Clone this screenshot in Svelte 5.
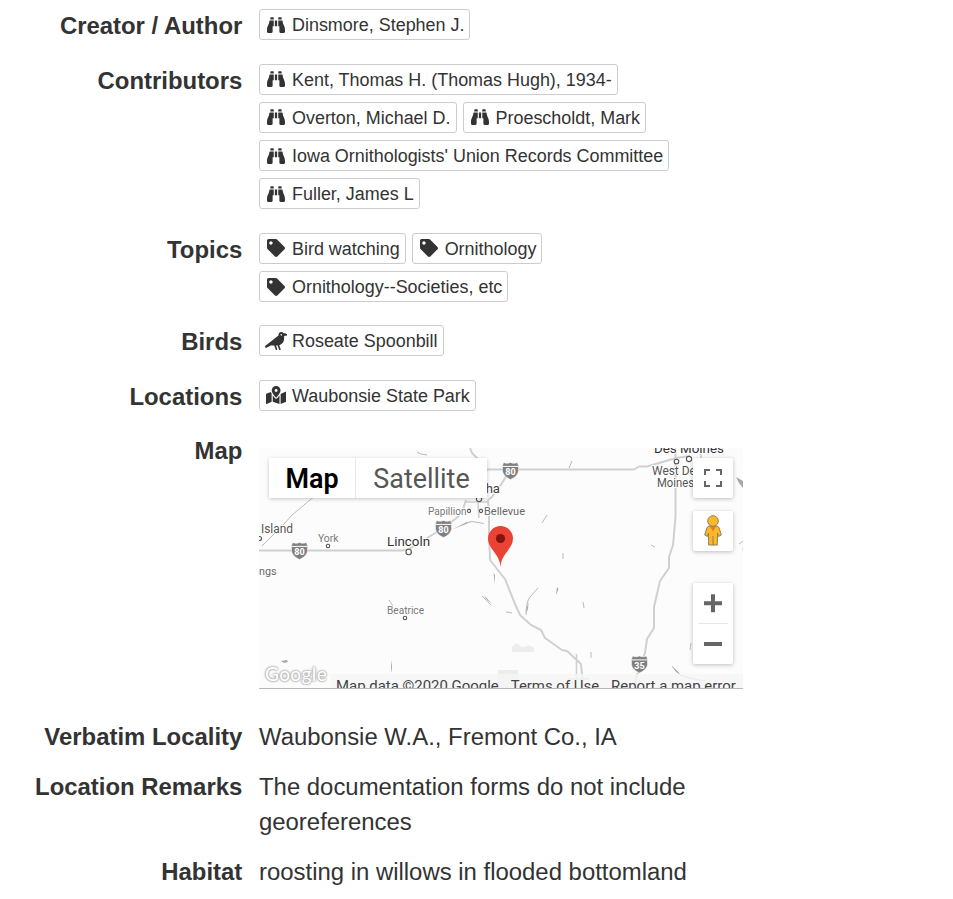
<script>
  const icons = {
    binoculars: {
      w: 512,
      d: 'M416 48c0-8.84-7.16-16-16-16h-64c-8.84 0-16 7.16-16 16v48h96V48zM63.91 159.99C61.4 253.84 3.46 274.22 0 404v44c0 17.67 14.33 32 32 32h96c17.67 0 32-14.33 32-32V288h32V128H95.84c-17.63 0-31.45 14.37-31.93 31.99zm384.18 0c-.48-17.62-14.3-31.99-31.93-31.99H320v160h32v160c0 17.67 14.33 32 32 32h96c17.67 0 32-14.33 32-32v-44c-3.46-129.78-61.4-150.16-63.91-244.01zM176 32h-64c-8.84 0-16 7.16-16 16v48h96V48c0-8.84-7.16-16-16-16zm48 256h64V128h-64v160z'
    },
    tag: {
      w: 512,
      d: 'M0 252.118V48C0 21.49 21.49 0 48 0h204.118a48 48 0 0 1 33.941 14.059l211.882 211.882c18.745 18.745 18.745 49.137 0 67.882L293.823 497.941c-18.745 18.745-49.137 18.745-67.882 0L14.059 286.059A48 48 0 0 1 0 252.118zM112 64c-26.51 0-48 21.49-48 48s21.49 48 48 48 48-21.49 48-48-21.49-48-48-48z'
    },
    crow: {
      w: 640,
      d: 'M544 32h-16.36C513.04 12.68 490.09 0 464 0c-44.18 0-80 35.82-80 80v20.98L12.09 393.57A30.216 30.216 0 0 0 0 417.74c0 22.46 23.64 37.07 43.73 27.03L165.27 384h96.49l44.41 120.1c2.27 6.23 9.15 9.44 15.38 7.17l22.55-8.21c6.23-2.27 9.44-9.15 7.17-15.38L312.94 384H352c1.91 0 3.76-.23 5.66-.29l44.51 120.38c2.27 6.23 9.15 9.44 15.38 7.17l22.55-8.21c6.23-2.27 9.44-9.15 7.17-15.38l-41.24-111.53C485.74 352.8 544 279.26 544 192v-80l96-16c0-35.35-42.98-64-96-64zm-80 72c-13.25 0-24-10.75-24-24 0-13.26 10.75-24 24-24s24 10.74 24 24c0 13.25-10.75 24-24 24z'
    },
    mapMarked: {
      w: 576,
      d: 'M288 0c-69.59 0-126 56.41-126 126 0 56.26 82.35 158.8 113.9 196.02 6.39 7.54 17.82 7.54 24.2 0C331.65 284.8 414 182.26 414 126 414 56.41 357.59 0 288 0zm0 168c-23.2 0-42-18.8-42-42s18.8-42 42-42 42 18.8 42 42-18.8 42-42 42zM20.12 215.95A32.006 32.006 0 0 0 0 245.66v250.32c0 11.32 11.43 19.06 21.94 14.86L160 448V214.92c-8.84-15.98-16.07-31.54-21.25-46.42L20.12 215.95zM288 359.67c-14.07 0-27.38-6.18-36.51-16.96-19.66-23.2-40.57-49.62-59.49-76.72v182l192 64V266c-18.92 27.09-39.82 53.52-59.49 76.72-9.13 10.77-22.44 16.95-36.51 16.95zm266.06-198.51L416 224v288l139.88-55.95A31.996 31.996 0 0 0 576 426.34V176.02c0-11.32-11.43-19.06-21.94-14.86z'
    }
  };

  const tagRows = [
    { label: 'Creator / Author', icon: 'binoculars', items: ['Dinsmore, Stephen J.'] },
    {
      label: 'Contributors',
      icon: 'binoculars',
      items: [
        'Kent, Thomas H. (Thomas Hugh), 1934-',
        'Overton, Michael D.',
        'Proescholdt, Mark',
        "Iowa Ornithologists' Union Records Committee",
        'Fuller, James L'
      ]
    },
    { label: 'Topics', icon: 'tag', items: ['Bird watching', 'Ornithology', 'Ornithology--Societies, etc'] },
    { label: 'Birds', icon: 'crow', items: ['Roseate Spoonbill'] },
    { label: 'Locations', icon: 'mapMarked', items: ['Waubonsie State Park'] }
  ];

  const textRows = [
    { label: 'Verbatim Locality', text: 'Waubonsie W.A., Fremont Co., IA' },
    { label: 'Location Remarks', text: 'The documentation forms do not include georeferences' },
    { label: 'Habitat', text: 'roosting in willows in flooded bottomland' }
  ];

  // Town markers: x, y, radius
  const towns = [
    [689, 459, 2.6],
    [676.5, 461.5, 2.3],
    [479, 499, 2.6],
    [469, 511, 1.6],
    [481, 511, 1.6],
    [259.5, 538.5, 2],
    [328, 546, 1.7],
    [408.7, 552, 2.7],
    [405, 618, 1.7]
  ];

  const labels = [
    { t: 'Des Moines', x: 654, y: 453, w: 70, s: 13, c: '#333' },
    { t: 'West Des', x: 652, y: 475, w: 50, s: 12, c: '#555' },
    { t: 'Moines', x: 657, y: 487, w: 37, s: 12, c: '#555' },
    { t: 'Omaha', x: 458, y: 493, w: 42, s: 13, c: '#444' },
    { t: 'Papillion', x: 428, y: 514.5, w: 38.5, s: 11, c: '#777' },
    { t: 'Bellevue', x: 484, y: 514.5, w: 41, s: 11, c: '#666' },
    { t: 'Island', x: 261, y: 533, w: 32, s: 12, c: '#555' },
    { t: 'York', x: 318, y: 541.5, w: 20.5, s: 11, c: '#777' },
    { t: 'Lincoln', x: 387, y: 545.5, w: 43, s: 13, c: '#333' },
    { t: 'ngs', x: 259, y: 575, w: 17.5, s: 11.5, c: '#666' },
    { t: 'Beatrice', x: 387, y: 613.5, w: 37, s: 11, c: '#777' }
  ];

  const shields = [
    [299.5, 551, '80'],
    [443.5, 529, '80'],
    [510.5, 471, '80'],
    [639.5, 664.5, '35']
  ];
</script>

<dl class="record">
  {#each tagRows as row}
    <div class="row">
      <dt>{row.label}</dt>
      <dd class="chips">
        {#each row.items as item}
          <a class="chip">
            <span class="icon">
              <svg height="18" width={(icons[row.icon].w / 512) * 18} viewBox="0 0 {icons[row.icon].w} 512">
                <path d={icons[row.icon].d} />
              </svg>
            </span>
            <span class="name">{item}</span>
          </a>
        {/each}
      </dd>
    </div>
  {/each}

  <div class="row map-row">
    <dt>Map</dt>
    <dd>
      <div class="map">
        <svg class="canvas" width="484" height="241" viewBox="259 448 484 241">
          <rect x="259" y="448" width="484" height="241" fill="#fcfcfc" />
          <path fill="#ededed" d="M512 652v-5l4-4 6 4 5-1 3-1 4 3v4zM498 670h20v19h-20z" />
          <path class="water" d="M417 452l4 2 6 1M262 546l22-22 8-9 24-20M542 523l5-8M569 468l3-7M563 553v6M482 596l9 9M389 600l4 6M526 615q0-13 4-18l8-9M583 602l1 6M506 612l6 1M591 652v6M672 666l8 9 9 3 16 3M690 650l1-7M651 545l4 2M739 544l4-3M743 548v2" />
          <path fill="#a8a8a8" d="M736 477l7 4v7l-4-5zM281 661l6-1 1 2-4 1zM391 660l1 6-.5 7-.5-4zM556 595l1-8 1.500 2zM493.500 573l1.500 2v9zM453 529l12-6 7-1.500-7 3zM484 595l8 9-6-5zM672 666l8 8-4-2zM526 614l1-7 1.500-5-.5 7z" />
          <path class="water" d="M465 523l7-1.500 12 2" />
          <g class="road">
            <path d="M259 550.5H402L409 549 432 535 443 528 458 517 463 509 466 500" />
            <path d="M488 500L492 497 502 483 510 470 516 469.500H634L639 466.500H647L676 458 690 456" />
            <path d="M470 448l2 5 8 8M486 469.500h24M488 500l1 12v20L490 560l11 14 4 5 10 25 5 11 11 10 10 5 4 8 17 12 5 1 14 13 2 22" />
            <path d="M675.500 452v65L673 545 669 557V568L660 581 654 607V628L647 639 645 653 636 678 634 689" />
            <path d="M465 502H488M478 503l1 15M576.500 654v25M701 453v5M568 679h21" class="thin" />
          </g>
          <g fill="#fff" stroke="#555" stroke-width="1.1">
            {#each towns as [x, y, r]}
              <circle cx={x} cy={y} {r} />
            {/each}
          </g>
          <g class="labels">
            {#each labels as l}
              <text x={l.x} y={l.y} textLength={l.w} lengthAdjust="spacingAndGlyphs" font-size={l.s} fill={l.c}>{l.t}</text>
            {/each}
          </g>
          {#each shields as [x, y, n]}
            <g transform="translate({x} {y})">
              <path d="M-6.800-8.500Q-3.500-6.800 0-8.500 3.500-6.800 6.800-8.500L8-5.500V0Q7.500 5 0 8.500-7.500 5-8 0V-5.500z" fill="#808080" stroke="#fff" stroke-width=".5" />
              <path d="M-7.800-4.600H7.800" stroke="#fff" stroke-width="1" />
              <text y="4" text-anchor="middle" class="num">{n}</text>
            </g>
          {/each}
          <path d="M500.500 567C500 554 488 549 488 538.500A12.500 12.500 0 0 1 513 538.500C513 549 501 554 500.500 567z" fill="#ea4335" />
          <circle cx="500.500" cy="538.500" r="4.600" fill="#811411" />
        </svg>

        <div class="types">
          <span class="type active">Map</span>
          <span class="type">Satellite</span>
        </div>

        <div class="control fullscreen">
          <svg width="18" height="18" viewBox="0 0 18 18">
            <path d="M1 6V1h5M12 1h5v5M17 12v5h-5M6 17H1v-5" fill="none" stroke="#666" stroke-width="2" />
          </svg>
        </div>
        <div class="control pegman">
          <svg width="18" height="31" viewBox="0 0 18 31">
            <path d="M5 11H13Q15 11.500 15.500 14L17.300 20 14.500 21.500 13.500 18 13.300 30H4.700L4.500 18 3.500 21.500.7 20 2.500 14Q3 11.500 5 11z" fill="#fbb82a" stroke="#8f7f5c" />
            <path d="M9 21v9" stroke="#a37b2c" />
            <path d="M5.500 11h7L9 16.500z" fill="#e07f27" />
            <circle cx="9" cy="6" r="5.300" fill="#fbb82a" stroke="#8f7f5c" />
          </svg>
        </div>
        <div class="control zoom">
          <svg width="40" height="81" viewBox="0 0 40 81">
            <path d="M11 20.300h18M20 11.300v18M11 61h18" stroke="#666" stroke-width="4" />
            <path d="M5 40.500h30" stroke="#e6e6e6" />
          </svg>
        </div>

        <span class="logo">Google</span>
        <div class="credits">
          <span>Map data ©2020 Google</span>
          <span>Terms of Use</span>
          <span>Report a map error</span>
        </div>
      </div>
    </dd>
  </div>

  {#each textRows as row}
    <div class="row">
      <dt>{row.label}</dt>
      <dd>{row.text}</dd>
    </div>
  {/each}
</dl>

<style>
  :global(body) {
    background: #fff;
  }
  .record {
    margin: 0;
    padding-top: 9.45px;
    width: 743px;
    display: flex;
    flex-direction: column;
    gap: 16.05px;
    font: 23.92px/34.3px 'Liberation Sans', Arial, sans-serif;
    color: #333;
  }
  .row {
    display: grid;
    grid-template-columns: 242.3px 484px;
    column-gap: 16.7px;
  }
  dt {
    text-align: right;
    font-weight: bold;
  }
  dd {
    margin: 0;
  }
  .chips {
    display: flex;
    flex-wrap: wrap;
    column-gap: 6px;
    max-width: 440px;
  }
  .chip {
    box-sizing: border-box;
    height: 31px;
    margin-bottom: 7.25px;
    border: 1px solid #ccc;
    border-radius: 3px;
    padding: 0 5px;
    display: flex;
    align-items: center;
    gap: 5px;
    font-size: 17.94px;
    line-height: 29px;
    white-space: nowrap;
  }
  .name {
    padding-top: 2px;
    line-height: 27px;
  }
  .icon {
    width: 22px;
    display: flex;
    justify-content: center;
  }
  .icon svg {
    flex: none;
    fill: #333;
  }
  .map-row {
    height: 270px;
  }
  .map {
    position: relative;
    width: 484px;
    height: 241px;
    margin-top: 13.9px;
    overflow: hidden;
    font-family: Roboto, sans-serif;
  }
  .map::after {
    content: '';
    position: absolute;
    inset: auto 0 0;
    height: 1px;
    background: #b8b8b8;
  }
  .canvas {
    display: block;
  }
  .road {
    fill: none;
    stroke: #d0d0d0;
    stroke-width: 2;
    stroke-linejoin: round;
  }
  .thin {
    stroke-width: 1.6;
  }
  .water {
    fill: none;
    stroke: #bbb;
    stroke-width: 1;
  }
  .labels text {
    stroke: #fff;
    stroke-width: 2px;
    paint-order: stroke;
    stroke-linejoin: round;
  }
  .num {
    font-size: 9px;
    font-weight: bold;
    fill: #fff;
  }
  .types {
    position: absolute;
    left: 10px;
    top: 10px;
    display: flex;
    height: 40px;
    box-shadow: 0 1px 4px rgba(0, 0, 0, 0.22);
  }
  .type {
    box-sizing: border-box;
    width: 131px;
    background: #fff;
    text-align: center;
    font-size: 26.9px;
    line-height: 42px;
    color: #565656;
  }
  .type.active {
    width: 87px;
    font-weight: 600;
    color: #000;
    border-right: 1px solid #e8e8e8;
  }
  .control {
    position: absolute;
    left: 434px;
    width: 40px;
    height: 40px;
    display: flex;
    align-items: center;
    justify-content: center;
    background: #fff;
    border-radius: 2px;
    box-shadow: 0 1px 4px rgba(0, 0, 0, 0.25);
  }
  .fullscreen {
    top: 10px;
  }
  .pegman {
    top: 63px;
  }
  .zoom {
    top: 135px;
    height: 81px;
  }
  .logo {
    position: absolute;
    left: 6px;
    top: 212px;
    font: 500 19px/27px Lato, sans-serif;
    letter-spacing: 0.4px;
    color: #fff;
    text-shadow: 0 0 2px #999, 0 0 2px #aaa, 0 0 3px #ccc;
  }
  .credits {
    position: absolute;
    left: 72px;
    right: 0;
    top: 226px;
    height: 15px;
    padding-left: 5px;
    display: flex;
    gap: 12px;
    background: rgba(245, 245, 245, 0.8);
    font-size: 14.95px;
    line-height: 24px;
    color: #444;
    white-space: nowrap;
  }
</style>
